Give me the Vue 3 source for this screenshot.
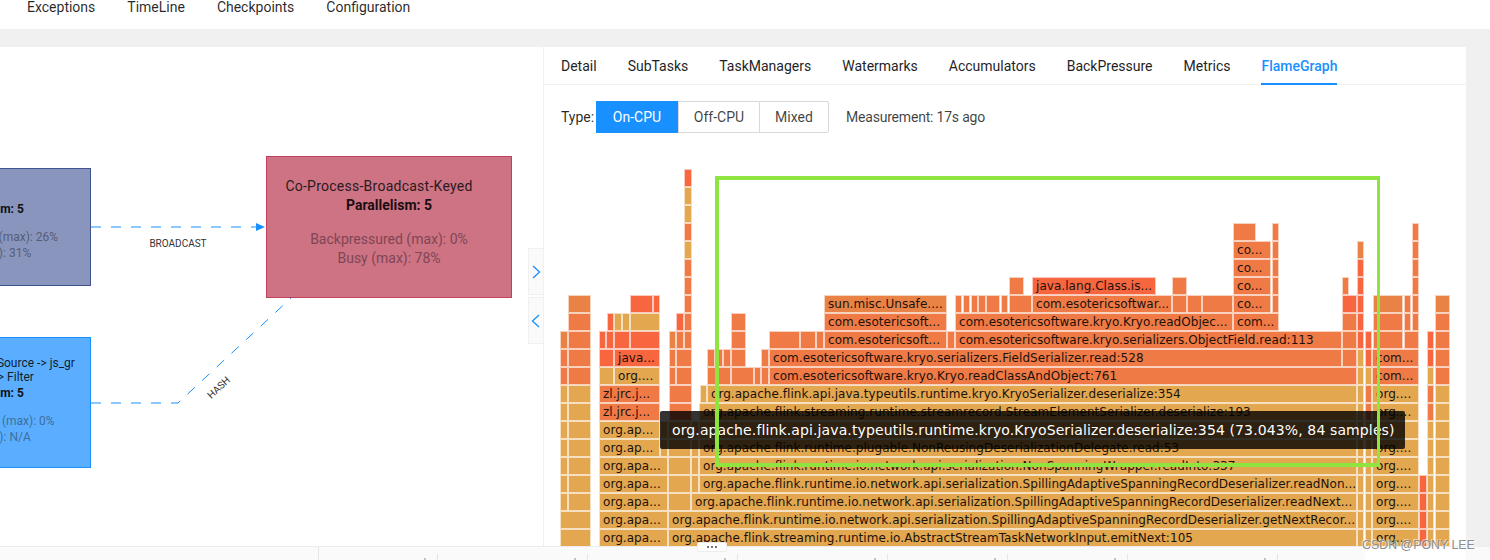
<script setup>
const navItems = ["Exceptions", "TimeLine", "Checkpoints", "Configuration"];
const tabs = ["Detail", "SubTasks", "TaskManagers", "Watermarks", "Accumulators", "BackPressure", "Metrics", "FlameGraph"];
const types = ["On-CPU", "Off-CPU", "Mixed"];

const colors = { O: "#f07a45", R: "#f7663f", G: "#e3a74f", L: "#e98245" };
const api = "org.apache.flink.runtime.io.network.api.serialization.";
const spill = api + "SpillingAdaptiveSpanningRecordDeserializer.";

// fila, x inicio, x fin, color, texto (fila 0 = la de abajo)
const raw = [
  [20, 684, 692, "R"], [19, 684, 692, "G"], [18, 684, 692, "G"], [17, 684, 692, "O"],
  [16, 684, 692, "G"], [15, 684, 692, "O"], [14, 684, 692, "O"], [13, 684, 692, "O"],

  [17, 1233, 1256, "O"], [17, 1272, 1279, "O"], [17, 1412, 1419, "O"],
  [16, 1233, 1271, "O", "co..."], [16, 1272, 1279, "O"], [16, 1357, 1364, "L"], [16, 1412, 1419, "O"],
  [15, 1233, 1271, "O", "co..."], [15, 1272, 1279, "O"], [15, 1357, 1364, "R"], [15, 1412, 1419, "O"],

  [14, 1009, 1024, "O"], [14, 1032, 1156, "R", "java.lang.Class.is..."], [14, 1172, 1187, "O"],
  [14, 1233, 1271, "O", "co..."], [14, 1272, 1279, "O"], [14, 1342, 1349, "O"], [14, 1357, 1364, "R"], [14, 1412, 1419, "O"],

  [13, 568, 591, "L"], [13, 630, 653, "R"], [13, 653, 660, "R"],
  [13, 824, 947, "L", "sun.misc.Unsafe...."], [13, 955, 962, "O"], [13, 963, 970, "O"], [13, 971, 978, "O"],
  [13, 978, 986, "O"], [13, 986, 1000, "O"], [13, 1001, 1008, "O"], [13, 1009, 1032, "O"],
  [13, 1032, 1172, "O", "com.esotericsoftwar..."], [13, 1172, 1187, "O"], [13, 1187, 1202, "O"], [13, 1202, 1233, "O"],
  [13, 1233, 1271, "O", "co..."], [13, 1272, 1279, "O"], [13, 1342, 1357, "R"], [13, 1357, 1364, "R"],
  [13, 1373, 1403, "L"], [13, 1404, 1411, "O"], [13, 1412, 1419, "O"], [13, 1435, 1450, "L"],

  [12, 568, 591, "O"], [12, 607, 614, "R"], [12, 614, 622, "G"], [12, 622, 630, "G"], [12, 630, 660, "G"],
  [12, 676, 684, "R"], [12, 684, 692, "O"], [12, 731, 746, "O"],
  [12, 824, 947, "O", "com.esotericsoft..."], [12, 955, 1233, "O", "com.esotericsoftware.kryo.Kryo.readObjec..."],
  [12, 1233, 1279, "O", "com..."], [12, 1342, 1357, "O"], [12, 1357, 1364, "R"],
  [12, 1373, 1403, "O"], [12, 1404, 1411, "O"], [12, 1412, 1419, "O"], [12, 1435, 1450, "O"],

  [11, 560, 568, "L"], [11, 568, 591, "O"], [11, 599, 606, "R"], [11, 606, 614, "R"], [11, 614, 630, "R"], [11, 630, 660, "R"],
  [11, 669, 676, "L"], [11, 676, 684, "O"], [11, 684, 692, "O"], [11, 731, 746, "O"],
  [11, 769, 800, "O"], [11, 800, 816, "O"], [11, 816, 824, "O"], [11, 824, 947, "O", "com.esotericsoft..."],
  [11, 947, 955, "O"], [11, 955, 1342, "O", "com.esotericsoftware.kryo.serializers.ObjectField.read:113"],
  [11, 1342, 1357, "O"], [11, 1357, 1364, "R"], [11, 1365, 1372, "R"], [11, 1373, 1403, "O"], [11, 1404, 1419, "O"],
  [11, 1427, 1434, "R"], [11, 1435, 1450, "O"],

  [10, 560, 568, "O"], [10, 568, 591, "O"], [10, 599, 614, "R"], [10, 614, 660, "R", "java..."],
  [10, 669, 676, "O"], [10, 676, 692, "O"], [10, 707, 715, "O"], [10, 715, 723, "O"], [10, 723, 731, "O"], [10, 731, 746, "O"], [10, 761, 769, "O"],
  [10, 769, 1342, "O", "com.esotericsoftware.kryo.serializers.FieldSerializer.read:528"],
  [10, 1342, 1357, "O"], [10, 1357, 1364, "G"], [10, 1365, 1372, "R"], [10, 1372, 1419, "O", "com..."],
  [10, 1427, 1434, "R"], [10, 1435, 1450, "O"],

  [9, 560, 568, "O"], [9, 568, 591, "O"], [9, 599, 614, "G"], [9, 614, 660, "G", "org...."],
  [9, 669, 676, "O"], [9, 676, 692, "O"], [9, 707, 731, "O"], [9, 731, 754, "O"], [9, 754, 761, "O"], [9, 761, 769, "O"],
  [9, 769, 1357, "O", "com.esotericsoftware.kryo.Kryo.readClassAndObject:761"],
  [9, 1357, 1364, "G"], [9, 1365, 1372, "G"], [9, 1372, 1419, "O", "com..."], [9, 1427, 1434, "G"], [9, 1435, 1450, "O"],

  [8, 560, 568, "G"], [8, 568, 591, "G"], [8, 599, 660, "O", "zl.jrc.j..."], [8, 669, 692, "O"], [8, 700, 707, "G"],
  [8, 707, 1357, "G", "org.apache.flink.api.java.typeutils.runtime.kryo.KryoSerializer.deserialize:354"],
  [8, 1357, 1364, "G"], [8, 1365, 1372, "O"], [8, 1372, 1419, "G", "org...."], [8, 1427, 1434, "O"], [8, 1435, 1450, "G"],

  [7, 560, 568, "G"], [7, 568, 591, "G"], [7, 599, 660, "O", "zl.jrc.j..."], [7, 669, 692, "O"],
  [7, 699, 1357, "G", "org.apache.flink.streaming.runtime.streamrecord.StreamElementSerializer.deserialize:193"],
  [7, 1357, 1364, "G"], [7, 1365, 1372, "O"], [7, 1372, 1419, "G", "org...."], [7, 1427, 1434, "O"], [7, 1435, 1450, "G"],

  [6, 560, 568, "G"], [6, 568, 591, "G"], [6, 599, 660, "G", "org.ap..."], [6, 660, 668, "G"], [6, 668, 691, "G"], [6, 691, 699, "G"],
  [6, 699, 1357, "G"],
  [6, 1357, 1364, "G"], [6, 1365, 1372, "G"], [6, 1372, 1419, "G"], [6, 1427, 1434, "G"], [6, 1435, 1450, "G"],

  [5, 560, 568, "G"], [5, 568, 591, "G"], [5, 599, 660, "G", "org.ap..."], [5, 660, 668, "G"], [5, 668, 691, "G"], [5, 691, 699, "G"],
  [5, 699, 1357, "G", "org.apache.flink.runtime.plugable.NonReusingDeserializationDelegate.read:53"],
  [5, 1357, 1364, "G"], [5, 1365, 1372, "G"], [5, 1372, 1419, "G", "org...."], [5, 1427, 1434, "G"], [5, 1435, 1450, "G"],

  [4, 560, 568, "G"], [4, 568, 591, "G"], [4, 599, 668, "G", "org.apa..."], [4, 668, 691, "G"], [4, 691, 699, "G"],
  [4, 699, 1357, "G", api + "NonSpanningWrapper.readInto:337"],
  [4, 1357, 1364, "G"], [4, 1365, 1372, "G"], [4, 1372, 1419, "G", "org...."], [4, 1427, 1434, "G"], [4, 1435, 1450, "G"],

  [3, 560, 568, "G"], [3, 568, 591, "G"], [3, 599, 668, "G", "org.apa..."], [3, 668, 691, "G"], [3, 691, 699, "G"],
  [3, 699, 1357, "G", spill + "readNon..."],
  [3, 1357, 1364, "G"], [3, 1365, 1372, "G"], [3, 1372, 1419, "G", "org...."], [3, 1419, 1427, "R"], [3, 1427, 1434, "G"], [3, 1435, 1450, "G"],

  [2, 560, 568, "G"], [2, 568, 591, "G"], [2, 599, 668, "G", "org.apa..."], [2, 668, 691, "G"],
  [2, 691, 1357, "G", spill + "readNext..."],
  [2, 1357, 1364, "G"], [2, 1365, 1372, "G"], [2, 1372, 1419, "G", "org...."], [2, 1419, 1427, "R"], [2, 1427, 1434, "G"], [2, 1435, 1450, "G"],

  [1, 560, 591, "G"], [1, 599, 668, "G", "org.apa..."],
  [1, 668, 1357, "G", spill + "getNextRecor..."],
  [1, 1357, 1364, "G"], [1, 1365, 1372, "G"], [1, 1372, 1419, "G", "org...."], [1, 1419, 1427, "R"], [1, 1427, 1434, "G"], [1, 1435, 1450, "G"],

  [0, 560, 591, "G"], [0, 599, 668, "G", "org.apa..."],
  [0, 668, 1357, "G", "org.apache.flink.streaming.runtime.io.AbstractStreamTaskNetworkInput.emitNext:105"],
  [0, 1357, 1364, "G"], [0, 1365, 1372, "G"], [0, 1372, 1419, "G", "org...."], [0, 1419, 1427, "R"], [0, 1427, 1434, "G"], [0, 1435, 1450, "G"],
];

const frames = raw.map(([row, x1, x2, c, label]) => ({
  label,
  style: {
    left: x1 - 544 + "px",
    top: 380 - row * 18 + "px",
    width: x2 - x1 + "px",
    background: colors[c],
  },
}));

// marca de agua repetida
const marks = [];
for (const y of [25, 155, 283, 415, 543]) {
  for (const x of [-93, 107, 307, 507, 710, 912, 1112, 1312]) {
    marks.push({ left: x + "px", top: y - 19 + "px" });
  }
}

const dividers = [437, 587, 737, 887, 1007, 1127, 1277];
</script>

<template>
  <div class="page">
    <nav class="topnav">
      <span v-for="item in navItems" :key="item">{{ item }}</span>
    </nav>

    <div class="content">
      <section class="left">
        <svg class="edges" width="543" height="499">
          <path d="M91 180 H258" class="edge" />
          <path d="M256 176 L265 180 L256 184 Z" fill="#1890ff" />
          <path d="M91 356 H178 L291 251" class="edge" />
          <text x="178" y="199.500" text-anchor="middle" class="edge-label">BROADCAST</text>
          <text x="0" y="0" text-anchor="middle" class="edge-label" transform="translate(221 343) rotate(-43)">HASH</text>
        </svg>

        <div class="node node-grey">
          <p class="node-name">&nbsp;</p>
          <p class="node-par">Parallelism: 5</p>
          <p class="node-stat">Backpressured (max): 26%</p>
          <p class="node-stat">Busy (max): 31%</p>
        </div>
        <div class="node node-pink">
          <p class="node-name">Co-Process-Broadcast-Keyed</p>
          <p class="node-par">Parallelism: 5</p>
          <p class="node-stat">Backpressured (max): 0%</p>
          <p class="node-stat">Busy (max): 78%</p>
        </div>
        <div class="node node-blue">
          <p class="node-name name-first">Source: Custom Source -> js_gr</p>
          <p class="node-name name-second">oup -> Map -> Filter</p>
          <p class="node-par">Parallelism: 5</p>
          <p class="node-stat">Backpressured (max): 0%</p>
          <p class="node-stat">Busy (max): N/A</p>
        </div>

        <button class="collapse collapse-top">
          <svg width="10" height="14" viewBox="0 0 10 14"><path d="M2 1 L8.500 7 L2 13" /></svg>
        </button>
        <button class="collapse collapse-bottom">
          <svg width="10" height="14" viewBox="0 0 10 14"><path d="M8 1 L1.500 7 L8 13" /></svg>
        </button>
      </section>

      <section class="right">
        <div class="tabs">
          <span v-for="tab in tabs" :key="tab" :class="['tab', { 'tab-active': tab === 'FlameGraph' }]">{{ tab }}</span>
        </div>
        <div class="toolbar">
          <span class="type-label">Type:</span>
          <div class="radio-group">
            <span v-for="t in types" :key="t" :class="['radio', { 'radio-on': t === 'On-CPU' }]">{{ t }}</span>
          </div>
          <span class="measure">Measurement: 17s ago</span>
        </div>
        <div class="flame">
          <div v-for="(f, i) in frames" :key="i" class="frame" :style="f.style">{{ f.label }}</div>
          <div class="flame-tip">org.apache.flink.api.java.typeutils.runtime.kryo.KryoSerializer.deserialize:354 (73.043%, 84 samples)</div>
          <div class="highlight"></div>
        </div>
      </section>
    </div>

    <footer class="bottom">
      <i v-for="x in dividers" :key="x" class="divider" :style="{ left: x + 'px' }"></i>
      <i v-for="x in dividers" :key="'t' + x" class="tick" :style="{ left: x - 13 + 'px' }"></i>
      <i class="divider divider-first"></i>
      <span class="handle"><i></i><i></i><i></i></span>
      <span class="bottom-white"></span>
    </footer>

    <span v-for="(m, i) in marks" :key="'m' + i" class="mark" :style="m">lijianjun46-706521</span>
    <span class="csdn">CSDN @PONY LEE</span>
  </div>
</template>

<style scoped>
.page {
  position: relative;
  width: 1490px;
  height: 560px;
  overflow: hidden;
  display: flex;
  flex-direction: column;
  background: #f0f0f0;
  font-family: Roboto, "Noto Sans", sans-serif;
  font-size: 14px;
  color: rgba(0, 0, 0, 0.85);
}

.topnav {
  height: 29px;
  flex: none;
  display: flex;
  gap: 32px;
  padding-left: 27px;
  background: #fff;
  line-height: 14px;
}

.content {
  flex: none;
  height: 499px;
  margin-top: 18px;
  display: flex;
  padding-right: 24px;
}

.left {
  position: relative;
  width: 543px;
  flex: none;
  background: #fff;
  border-right: 1px solid #f0f0f0;
  overflow: hidden;
}

.edges {
  position: absolute;
  left: 0;
  top: 0;
}

.edge {
  fill: none;
  stroke: #1890ff;
  stroke-width: 1;
  stroke-dasharray: 10 10;
}

.edge-label {
  font-size: 10px;
  fill: #333;
}

.node {
  position: absolute;
  box-sizing: border-box;
  text-align: center;
  border-style: solid;
}

.node p {
  margin: 0;
  white-space: nowrap;
}

.node-pink {
  left: 266px;
  top: 109px;
  width: 246px;
  height: 142px;
  padding-top: 20px;
  border-width: 1.500px;
  background: #ce7384;
  border-color: #c0415c;
  font-size: 14px;
  line-height: 19px;
}

.node-pink .node-name {
  color: #2b1a1e;
  padding-right: 20px;
  letter-spacing: 0.250px;
}

.node-pink .node-par {
  font-weight: 700;
  color: #1a0d10;
  margin-bottom: 15px;
}

.node-pink .node-stat {
  color: #7e4653;
}

.node-grey {
  left: -117px;
  top: 121px;
  width: 208px;
  height: 118px;
  padding-top: 14px;
  border-width: 1px;
  background: #8a95bd;
  border-color: #41538f;
  font-size: 12px;
  line-height: 17px;
}

.node-blue {
  left: -117px;
  top: 290px;
  width: 208px;
  height: 131px;
  padding-top: 18px;
  border-width: 1px;
  background: #5baeff;
  border-color: #1890ff;
  font-size: 12px;
  line-height: 14px;
}

.name-first {
  padding-left: 10px;
}

.name-second {
  padding-right: 8px;
}

.node-grey .node-par,
.node-blue .node-par {
  font-weight: 700;
  color: #111;
  margin: 1px 0 11px;
  line-height: 17px;
}

.node-grey .node-stat {
  color: #555d77;
  line-height: 16px;
}

.node-blue .node-stat {
  color: #3b6f9f;
  line-height: 16px;
}

.collapse {
  position: absolute;
  left: 528px;
  width: 15px;
  padding: 0;
  border: 1px solid #f0f0f0;
  border-right: none;
  background: #fafafa;
}

.collapse svg {
  display: block;
  margin: 0 auto;
}

.collapse path {
  fill: none;
  stroke: #1890ff;
  stroke-width: 1.300;
}

.collapse-top {
  top: 201px;
  height: 47px;
}

.collapse-bottom {
  top: 250px;
  height: 47px;
}

.right {
  flex: 1;
  background: #fff;
  display: flex;
  flex-direction: column;
}

.tabs {
  height: 38px;
  flex: none;
  box-sizing: border-box;
  display: flex;
  gap: 31px;
  padding-left: 17px;
  border-bottom: 1px solid #f0f0f0;
  line-height: 38px;
  color: #1f1f28;
}

.tab {
  height: 38px;
  box-sizing: border-box;
}

.tab-active {
  color: #1890ff;
  font-weight: 500;
  border-bottom: 2px solid #1890ff;
}

.toolbar {
  height: 64px;
  flex: none;
  box-sizing: border-box;
  display: flex;
  align-items: flex-start;
  padding: 16px 0 0 17px;
  line-height: 32px;
}

.type-label {
  width: 35px;
}

.radio-group {
  display: flex;
  height: 32px;
  box-sizing: border-box;
  border: 1px solid #d9d9d9;
  border-radius: 2px;
  line-height: 30px;
}

.radio {
  width: 81px;
  text-align: center;
  box-sizing: border-box;
  border-left: 1px solid #d9d9d9;
  color: rgba(0, 0, 0, 0.75);
}

.radio:first-child {
  border-left: none;
}

.radio:last-child {
  width: 69px;
}

.radio-on {
  margin: -1px 0 -1px -1px;
  width: 82px;
  line-height: 32px;
  background: #1890ff;
  color: #fff;
}

.measure {
  margin-left: 17px;
  letter-spacing: -0.200px;
  color: rgba(0, 0, 0, 0.75);
}

.flame {
  position: relative;
  flex: 1;
}

.frame {
  position: absolute;
  box-sizing: border-box;
  height: 18px;
  padding-left: 3px;
  border: 1px solid rgba(255, 255, 255, 0.65);
  overflow: hidden;
  white-space: nowrap;
  font-family: "DejaVu Sans", Verdana, sans-serif;
  font-size: 12px;
  letter-spacing: 0.050px;
  line-height: 16px;
  color: #1c120c;
}

.flame-tip {
  position: absolute;
  left: 116px;
  top: 262px;
  width: 745px;
  height: 38px;
  box-sizing: border-box;
  padding-left: 12px;
  border-radius: 2px;
  background: rgba(0, 0, 0, 0.8);
  color: #fff;
  font-family: "DejaVu Sans", Verdana, sans-serif;
  font-size: 14px;
  letter-spacing: 0.120px;
  line-height: 38px;
  white-space: nowrap;
}

.highlight {
  position: absolute;
  left: 171px;
  top: 27px;
  width: 665px;
  height: 291px;
  box-sizing: border-box;
  border: solid #8ee53f;
  border-width: 4px 3px 4px 4px;
}

.bottom {
  position: relative;
  flex: none;
  height: 14px;
  box-sizing: border-box;
  border-top: 1px solid #ececec;
  background: #fafafa;
}

.divider {
  position: absolute;
  top: 7px;
  bottom: 0;
  width: 1px;
  background: #e6e6e6;
}

.divider-first {
  left: 318px;
  top: 0;
}

.tick {
  position: absolute;
  top: 11px;
  width: 2px;
  height: 3px;
  background: #c4c4c4;
}

.handle {
  position: absolute;
  left: 697px;
  top: -5px;
  width: 30px;
  height: 10px;
  box-sizing: border-box;
  display: flex;
  align-items: center;
  justify-content: center;
  gap: 2px;
  background: #fff;
  border: 1px solid #ececec;
  border-radius: 2px;
}

.handle i {
  width: 2px;
  height: 2px;
  border-radius: 50%;
  background: #444;
}

.bottom-white {
  position: absolute;
  left: 1365px;
  right: 24px;
  top: 0;
  bottom: 0;
  background: #fff;
}

.mark {
  position: absolute;
  transform: rotate(-22deg);
  transform-origin: left bottom;
  font-size: 14px;
  color: rgba(0, 0, 0, 0.025);
  white-space: nowrap;
  pointer-events: none;
}

.csdn {
  position: absolute;
  left: 1362px;
  top: 538px;
  font-family: "Liberation Sans", Arial, sans-serif;
  font-size: 12.400px;
  white-space: nowrap;
  color: #8e8e8e;
  text-shadow: 1px 1px 0 rgba(255, 255, 255, 0.7), -1px -1px 0 rgba(255, 255, 255, 0.5);
}
</style>
<style>
html,
body {
  background: #fff;
}
</style>
